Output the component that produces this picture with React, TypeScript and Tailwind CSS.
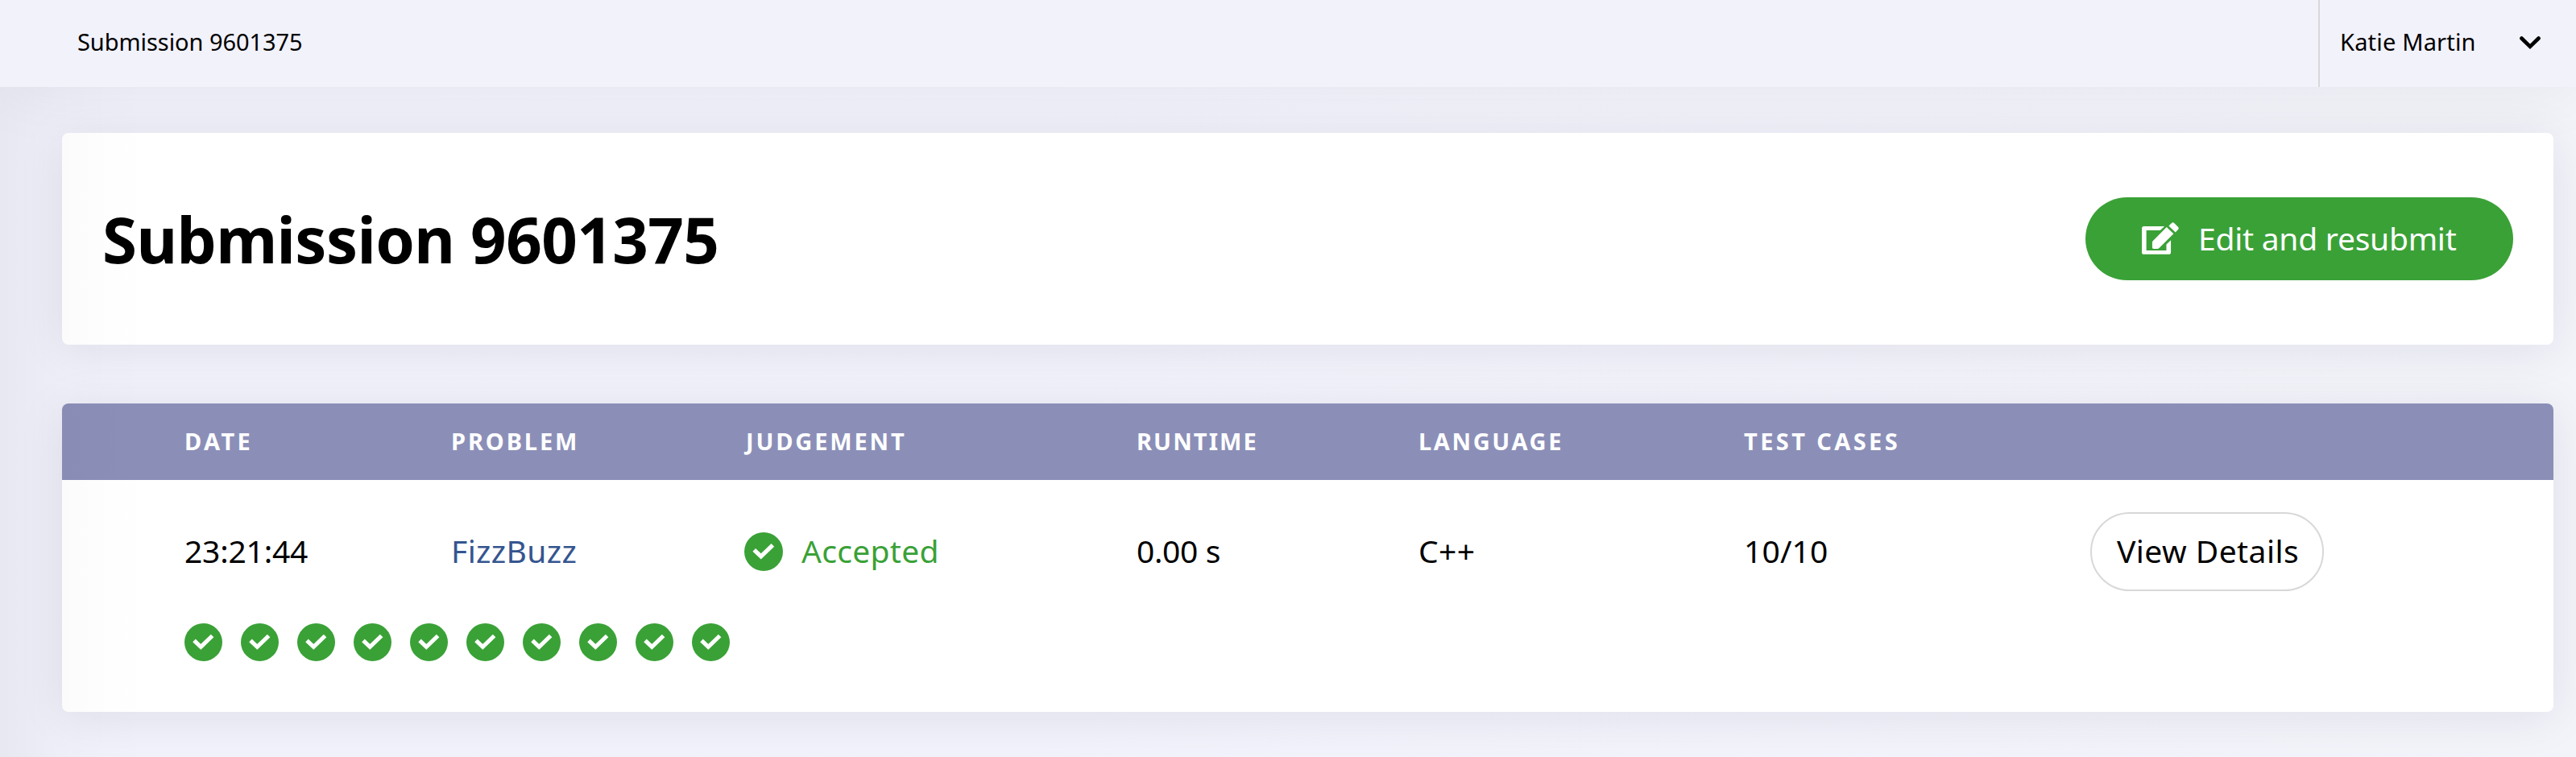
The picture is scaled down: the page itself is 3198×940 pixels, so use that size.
import React from "react";

const COLUMNS =
  "grid grid-cols-[331px_364px_487px_350px_404px_430px_1fr] items-center pl-[152px]";

const HEADINGS = [
  { label: "Date", className: "tracking-[3.4px]" },
  { label: "Problem", className: "tracking-[2.9px]" },
  { label: "Judgement", className: "pl-0.5 tracking-[2.86px]" },
  { label: "Runtime", className: "tracking-[2.1px]" },
  { label: "Language", className: "tracking-[2.6px]" },
  { label: "Test cases", className: "tracking-[3.4px]" },
];

const TEST_CASES = Array.from({ length: 10 }, (_, i) => i + 1);

function CheckIcon({ className }: { className: string }) {
  return (
    <svg viewBox="0 0 47 47" className={className} fill="none">
      <circle cx="23.5" cy="23.5" r="23.5" fill="#3aa137" />
      <path
        d="M12 21.3 20.3 29.3 34.6 15.5"
        stroke="#fff"
        strokeWidth="5.1"
      />
    </svg>
  );
}

function EditIcon() {
  return (
    <svg viewBox="265 138 139 120" className="h-10 w-[46px]" fill="#fff">
      <path d="M275 153H350L334 168H282V243H357V221L374 205V250Q374 258 366 258H273Q265 258 265 250V161Q265 153 273 153Z" />
      <path d="M358 156 384 181 330 234Q327 237 323 237H309Q304 237 304 232V214Q304 210 307 207Z" />
      <path d="M366 151 376 141Q382 136 387 141L400 154Q406 160 401 165L391 175Z" />
    </svg>
  );
}

function ChevronIcon() {
  return (
    <svg viewBox="0 0 26 17" className="mt-px h-[17px] w-[26px]" fill="none">
      <path
        d="M2.4 2.5 13 12.9 23.6 2.5"
        stroke="#000"
        strokeWidth="4.6"
        strokeLinecap="round"
      />
    </svg>
  );
}

function Header() {
  return (
    <header className="flex h-[108px] items-stretch justify-between bg-[#f2f2fb] text-[29px] leading-10 shadow-[0_0_90px_rgba(0,0,0,0.065)]">
      <div className="flex items-center pb-1 pl-24 tracking-[-0.06px]">
        Submission 9601375
      </div>
      <button className="flex w-80 items-center border-l-2 border-[#d8d8d8] pb-[3px] pl-[25px] tracking-[0.18px]">
        <span className="w-[223px] pb-px text-left">Katie Martin</span>
        <ChevronIcon />
      </button>
    </header>
  );
}

export default function App() {
  return (
    <div className="relative h-[940px] overflow-hidden bg-linear-to-r from-[#f2f2fc] from-40% to-[#f3f4fa] font-['Noto_Sans',sans-serif] text-black">
      <Header />
      <main className="mt-[57px] mr-7 ml-[77px] flex flex-col gap-[73px]">
        <section className="flex h-[263px] items-center justify-between rounded-lg bg-white pr-[50px] pl-[50px] shadow-[0_6px_60px_rgba(20,20,50,0.085)]">
          <h1 className="text-[78px] leading-none font-bold tracking-[-0.6px]">
            Submission 9601375
          </h1>
          <button className="flex h-[103px] w-[531px] items-center gap-6 rounded-full bg-[#3aa137] pl-[70px] text-[39px] leading-none tracking-[-0.25px] text-white">
            <span className="pb-px">
              <EditIcon />
            </span>
            <span className="pb-[3px]">Edit and resubmit</span>
          </button>
        </section>

        <section className="h-[383px] rounded-lg bg-white shadow-[0_6px_60px_rgba(20,20,50,0.085)]">
          <div
            className={`${COLUMNS} h-[95px] rounded-t-lg bg-[#8b8fb8] pb-[3px] text-[29px] leading-none font-bold text-white uppercase`}
          >
            {HEADINGS.map((h) => (
              <div key={h.label} className={h.className}>
                {h.label}
              </div>
            ))}
          </div>
          <div className={`${COLUMNS} mt-10 h-[98px] text-[39px] leading-none`}>
            <div className="pb-1 tracking-[-0.21px]">23:21:44</div>
            <a className="pb-1 tracking-[0.4px] text-[#35558f]">FizzBuzz</a>
            <div className="flex items-center gap-[23px] text-[#3aa137]">
              <CheckIcon className="size-12" />
              <span className="pb-1 tracking-[0.3px]">Accepted</span>
            </div>
            <div className="pb-1 tracking-[-0.36px]">0.00 s</div>
            <div className="pb-1 tracking-[0.4px]">C++</div>
            <div className="pb-1 tracking-[0.14px]">10/10</div>
            <button className="h-[98px] w-[290px] rounded-full border-2 border-[#d8d8d8] pb-1 pl-[31px] text-left tracking-[0.45px]">
              View Details
            </button>
          </div>
          <div className="mt-10 flex gap-[23px] pl-[152px]">
            {TEST_CASES.map((n) => (
              <CheckIcon key={n} className="size-[47px]" />
            ))}
          </div>
        </section>
      </main>
      <div className="pointer-events-none absolute top-[108px] bottom-0 left-0 w-[200px] bg-[linear-gradient(to_right,rgba(0,0,0,0.045),rgba(0,0,0,0.016)_77px,rgba(0,0,0,0.005)_140px,transparent)]" />
    </div>
  );
}
